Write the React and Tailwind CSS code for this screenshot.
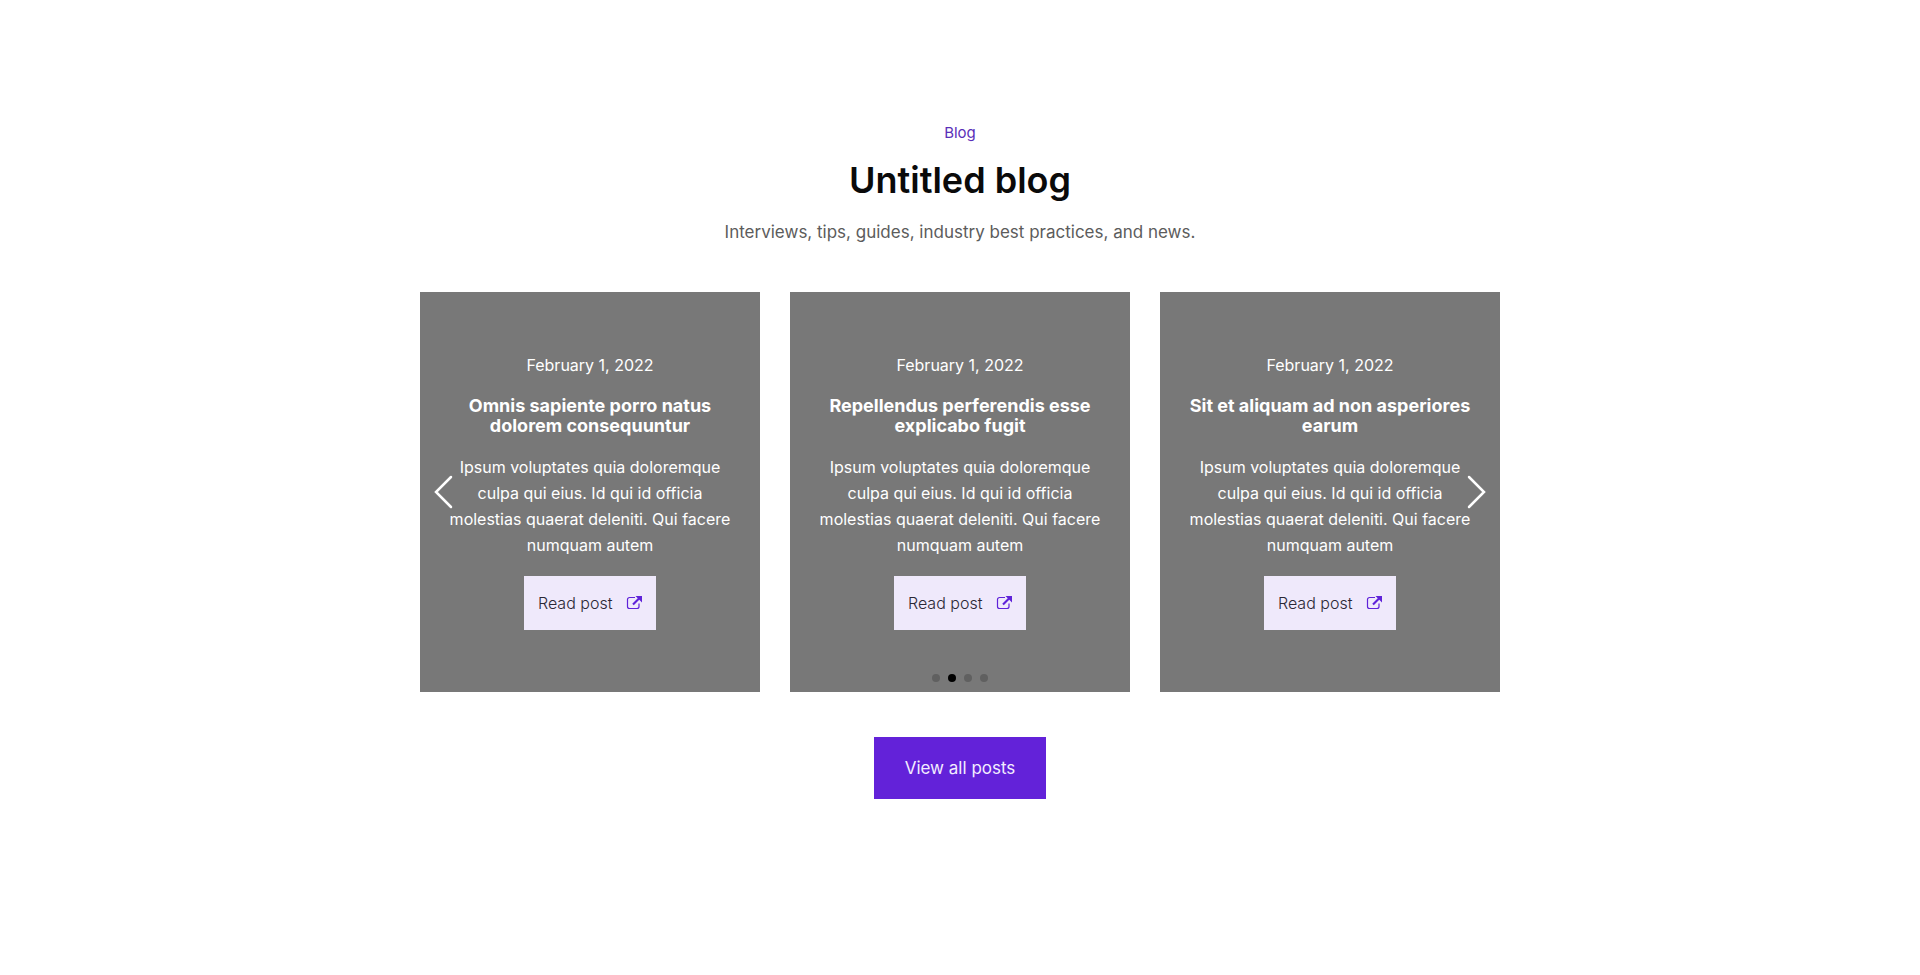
import React, { useState } from "react";

const excerpt =
    "Ipsum voluptates quia doloremque culpa qui eius. Id qui id officia molestias quaerat deleniti. Qui facere numquam autem";

const posts = [
    { id: 1, date: "February 1, 2022", title: "Omnis sapiente porro natus dolorem consequuntur", excerpt },
    { id: 2, date: "February 1, 2022", title: "Repellendus perferendis esse explicabo fugit", excerpt },
    { id: 3, date: "February 1, 2022", title: "Sit et aliquam ad non asperiores earum", excerpt },
];

const PAGES = 4;

function ShareIcon() {
    return (
        <svg className="w-4 h-4 text-[#5f22d9]" viewBox="0 0 16 16" fill="none" aria-hidden="true">
            <path
                d="M9 2.5H3.500A2 2 0 0 0 1.500 4.500v7a2 2 0 0 0 2 2h7.500a2 2 0 0 0 2-2V8.500"
                stroke="currentColor"
                strokeWidth="1.200"
            />
            <path d="M7 9.500 13 3.500" stroke="currentColor" strokeWidth="2.200" />
            <path d="M9.500 1H16v6.500z" fill="currentColor" />
        </svg>
    );
}

function PostCard({ post }) {
    return (
        <article className="flex flex-col items-center justify-center gap-[18px] min-h-[400px] px-6 pb-0.5 bg-[#787878] text-center text-white">
            <p className="text-base leading-[26px]">{post.date}</p>
            <h3 className="text-lg leading-5 font-bold">{post.title}</h3>
            <p className="text-base leading-[26px]">{post.excerpt}</p>
            <a
                href="#post"
                className="flex items-center justify-between w-[132px] h-[54px] px-3.5 bg-[#efe9fb] text-base font-light text-[#2b2836]"
            >
                Read post
                <ShareIcon />
            </a>
        </article>
    );
}

function App() {
    const [active, setActive] = useState(1);

    const prev = () => setActive((page) => (page + PAGES - 1) % PAGES);
    const next = () => setActive((page) => (page + 1) % PAGES);

    return (
        <section className="flex flex-col items-center px-6 py-[120px] bg-white font-['Inter',sans-serif]">
            <p className="text-[15px] leading-[26px] text-[#5a2fb8]">Blog</p>
            <h2 className="mt-2.5 text-4xl leading-12 font-semibold text-[#0a0a0a]">Untitled blog</h2>
            <p className="mt-4 text-[17px] leading-6 text-[#5c5c5c]">
                Interviews, tips, guides, industry best practices, and news.
            </p>

            <div className="relative w-full max-w-[1080px] mt-12">
                <div className="grid grid-cols-1 gap-[30px] lg:grid-cols-3">
                    {posts.map((post) => (
                        <PostCard key={post.id} post={post} />
                    ))}
                </div>

                {/* Slider controls */}
                <button
                    type="button"
                    aria-label="Previous posts"
                    onClick={prev}
                    className="absolute left-2.5 top-1/2 -translate-y-1/2 text-white"
                >
                    <svg className="w-7 h-11" viewBox="0 0 28 44" fill="none" aria-hidden="true">
                        <path d="M21 7 6 22l15 15" stroke="currentColor" strokeWidth="2.500" strokeLinecap="round" />
                    </svg>
                </button>
                <button
                    type="button"
                    aria-label="Next posts"
                    onClick={next}
                    className="absolute right-2.5 top-1/2 -translate-y-1/2 text-white"
                >
                    <svg className="w-7 h-11" viewBox="0 0 28 44" fill="none" aria-hidden="true">
                        <path d="m7 7 15 15L7 37" stroke="currentColor" strokeWidth="2.500" strokeLinecap="round" />
                    </svg>
                </button>
                <div className="absolute inset-x-0 bottom-2.5 flex justify-center gap-2">
                    {Array.from({ length: PAGES }, (_, page) => (
                        <button
                            key={page}
                            type="button"
                            aria-label={`Go to slide ${page + 1}`}
                            onClick={() => setActive(page)}
                            className={`w-2 h-2 rounded-full bg-black ${page === active ? "" : "opacity-20"}`}
                        />
                    ))}
                </div>
            </div>

            <a
                href="#posts"
                className="mt-[45px] px-[31px] py-[19px] bg-[#6322d9] text-[17px] leading-6 text-[#f3edff]"
            >
                View all posts
            </a>
        </section>
    );
}

export default App;
